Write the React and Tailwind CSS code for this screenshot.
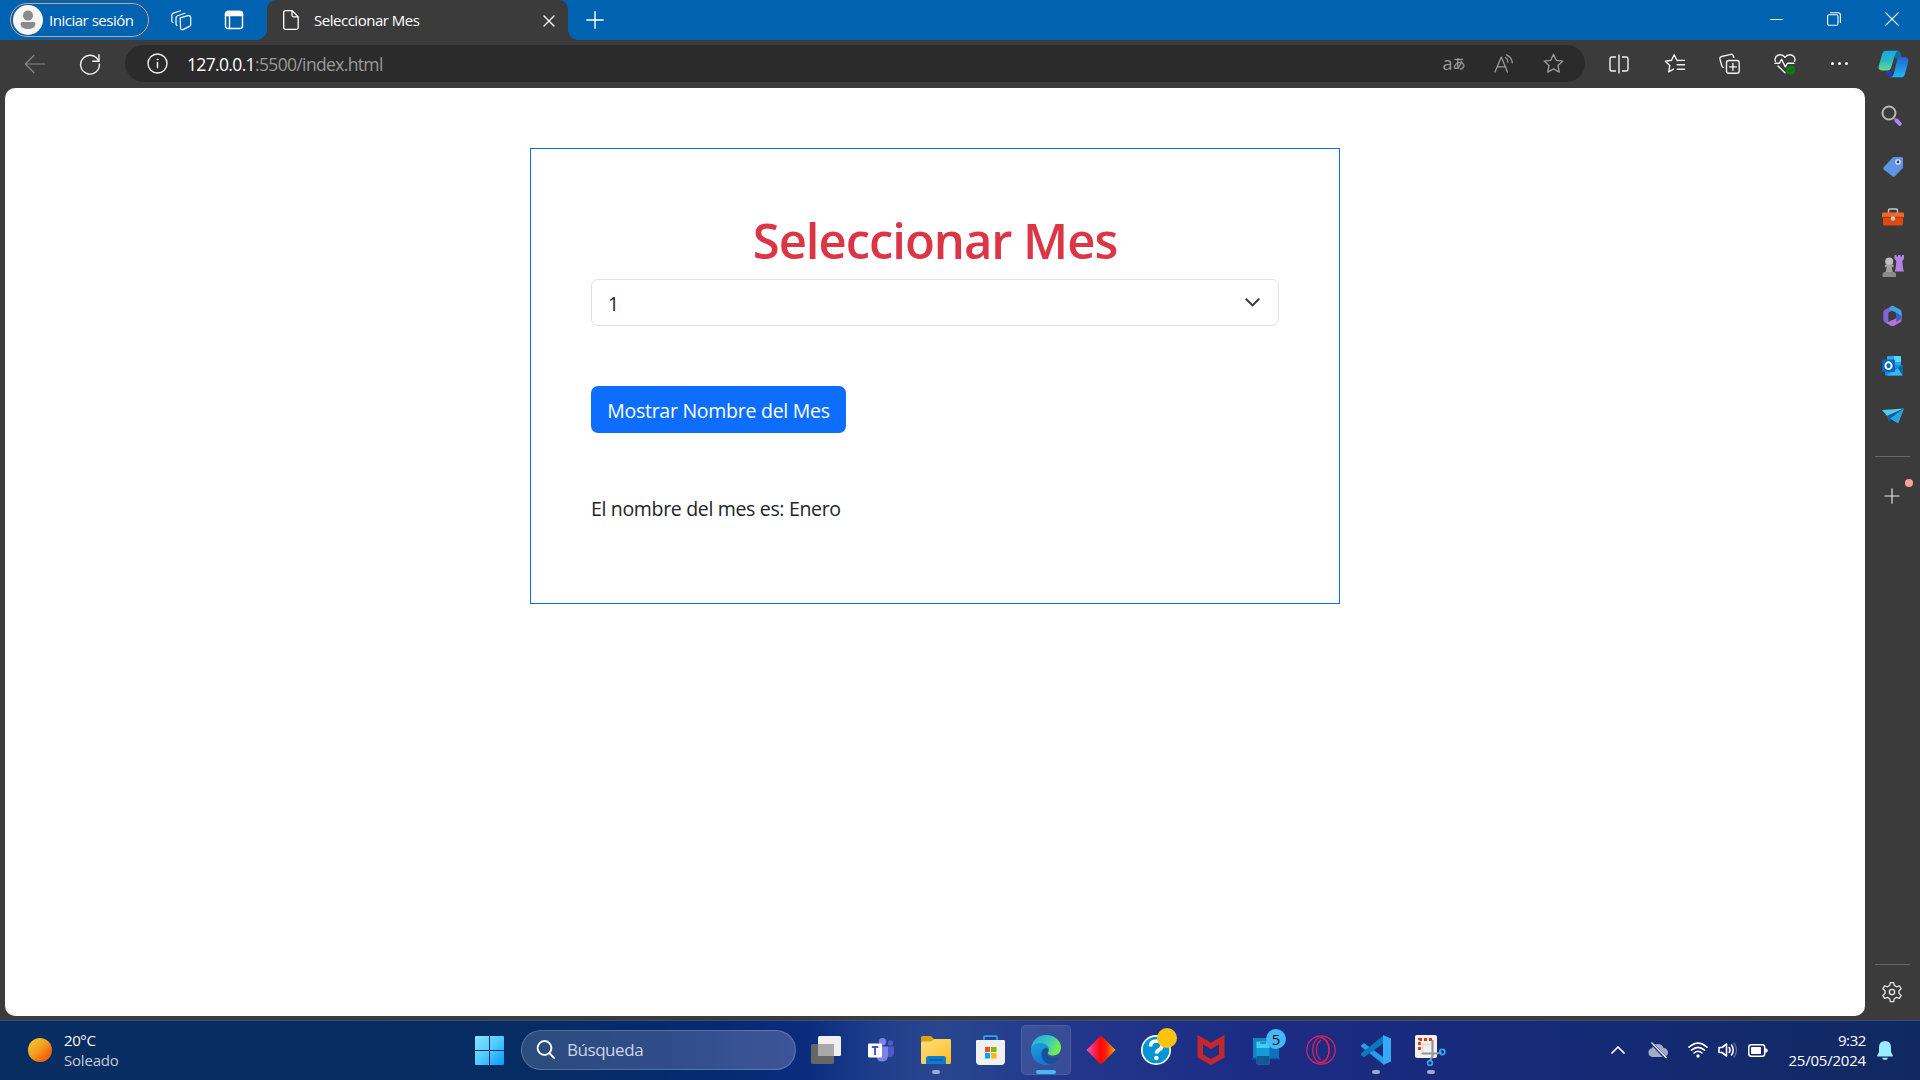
import React from "react";

const Svg = ({ size = 20, box = 24, children, className = "" }) => (
  <svg width={size} height={size} viewBox={`0 0 ${box} ${box}`} fill="none" stroke="currentColor" strokeWidth="1.4" strokeLinecap="round" strokeLinejoin="round" className={`shrink-0 ${className}`}>
    {children}
  </svg>
);

const Slot = ({ className = "", children }) => (
  <div className={`flex shrink-0 items-center justify-center ${className}`}>{children}</div>
);

/* ---------- Title bar ---------- */

function TitleBar() {
  return (
    <header className="flex h-10 shrink-0 bg-[#0063b1] text-white">
      <div className="ml-[10px] mt-[3px] flex h-[34px] w-[139px] items-center rounded-full border border-[#dba078] pl-[2px]">
        <svg width="30" height="30" viewBox="0 0 30 30" className="shrink-0">
          <circle cx="15" cy="15" r="15" fill="#f7f7f7" />
          <circle cx="15" cy="10.6" r="5" fill="#8b8b8b" />
          <path d="M9.6 17h10.8c1.2 0 2 .8 2 2 0 3.4-3.2 5-7.400 5s-7.400-1.600-7.400-5c0-1.200.8-2 2-2z" fill="#8b8b8b" />
        </svg>
        <span className="ml-[6px] whitespace-nowrap pb-px text-[15px] leading-[20px] tracking-[-0.48px]">Iniciar sesión</span>
      </div>
      <Slot className="ml-[6px] w-[52px]">
        <Svg size={22} box={22}>
          <path d="M10.200 8.900 18 6.700q2.700-.5 2.700 2v7.100q0 1.200-1.200 1.600l-6 3q-3 1.100-3-1.800z" strokeWidth="1.200" />
          <path d="M7 16.500q-1-.4-1-1.700V9q0-1.700 1.600-2.300L15 4.300" strokeWidth="1.200" />
          <path d="M3 13.500q-1.200-.4-1.200-1.800V6.300q0-1.700 1.600-2.200L10.500 1.800" strokeWidth="1.200" />
        </Svg>
      </Slot>
      <Slot className="w-[53px]">
        <Svg size={20} box={20}>
          <rect x="1.500" y="1.500" width="17" height="17" rx="2.500" />
          <path d="M1.500 5.500V4q0-2.500 2.500-2.500h12q2.500 0 2.500 2.500v1.500z" fill="currentColor" />
          <path d="M5.500 6v12.500" />
        </Svg>
      </Slot>
      <div className="relative ml-[7px] flex w-[301px] items-center rounded-t-[9px] bg-[#3b3b3b]">
        <span className="absolute -left-[10px] bottom-0 h-[10px] w-[10px] bg-[radial-gradient(circle_at_0_0,transparent_9.500px,#3b3b3b_10px)]" />
        <span className="absolute -right-[10px] bottom-0 h-[10px] w-[10px] bg-[radial-gradient(circle_at_100%_0,transparent_9.500px,#3b3b3b_10px)]" />
        <Slot className="w-[47px]">
          <svg width="16" height="20" viewBox="0 0 16 20" fill="none" stroke="white" strokeWidth="1.300" strokeLinejoin="round">
            <path d="M2.500.7h6.700l6 6v10.800q0 1.800-1.800 1.800H2.500Q.7 19.300.7 17.500v-15Q.7.700 2.500.7z" />
            <path d="M9 .8v4.400q0 1.700 1.700 1.700H15" />
          </svg>
        </Slot>
        <span className="flex-1 whitespace-nowrap pb-px text-[15px] leading-[20px] tracking-[-0.48px]">Seleccionar Mes</span>
        <Slot className="w-[38px] pt-px">
          <Svg size={12} box={12}><path d="m1 1 10 10M11 1 1 11" /></Svg>
        </Slot>
      </div>
      <Slot className="w-[53px] pb-[1px]">
        <Svg size={18} box={18}><path d="M9 .8v16.400M.8 9h16.400" /></Svg>
      </Slot>
      <div className="ml-auto flex pb-[2px]">
        <Slot className="w-[57px]"><span className="h-px w-[13px] bg-white" /></Slot>
        <Slot className="w-[58px]">
          <Svg size={14} box={14}>
            <rect x=".6" y="2.800" width="10.400" height="10.400" rx="1.500" strokeWidth="1.100" />
            <path d="M3.400.7H11q2.400 0 2.400 2.400v7.400" strokeWidth="1.100" />
          </Svg>
        </Slot>
        <Slot className="w-[57px]"><Svg size={14} box={14}><path d="m.8.8 12.400 12.400M13.200.8.8 13.200" strokeWidth="1.100" /></Svg></Slot>
      </div>
    </header>
  );
}

/* ---------- Address bar ---------- */

const STAR = "M12 2.500l2.900 6.200 6.800.8-5 4.700 1.300 6.800-6-3.400-6 3.400 1.300-6.800-5-4.700 6.800-.8z";

function Toolbar() {
  return (
    <nav className="flex h-12 shrink-0 items-center bg-[#3b3b3b] pb-[1px] text-[#f0f0f0]">
      <Slot className="ml-[7px] w-[55px] text-[#858585]">
        <Svg size={22} box={22}><path d="M20.500 11H1.700M9.800 2.500 1.300 11l8.500 8.500" strokeWidth="1.200" /></Svg>
      </Slot>
      <Slot className="w-[55px]">
        <Svg size={22} box={22}>
          <path d="M19.800 8.300A9.400 9.400 0 1 0 20.400 11" />
          <path d="M20 1.800v6.500h-6.300" />
        </Svg>
      </Slot>
      <div className="ml-2 flex h-[37px] w-[1460px] items-center rounded-full bg-[#2b2b2b] pl-[22px] pr-[6px]">
        <Svg size={21} box={21}>
          <circle cx="10.500" cy="10.500" r="9.500" />
          <path d="M10.500 9.500v5.300" strokeWidth="1.500" />
          <circle cx="10.500" cy="6.500" r=".6" fill="currentColor" strokeWidth=".6" />
        </Svg>
        <span className="ml-[19px] flex-1 whitespace-nowrap text-[17.500px] leading-[24px] tracking-[-0.65px] text-[#9a9a9a]">
          <span className="text-white">127.0.0.1</span>:5500/index.html
        </span>
        <Slot className="w-[50px] pb-[2px] text-[#9a9a9a]">
          <span className="text-[18px] leading-none">a</span>
          <span className="font-['Noto_Sans_CJK_JP',sans-serif] text-[13px] font-medium leading-none">あ</span>
        </Slot>
        <Slot className="w-[50px] text-[#9a9a9a]">
          <Svg size={20} box={20}>
            <path d="M1 18 7.300 3l6.200 15M3.300 12.800h8" strokeWidth="1.300" />
            <path d="M11.500 3.500q2.500 1.700 2.500 4.800M12.600.8q5.200 2.600 5.700 8" strokeWidth="1.300" />
          </Svg>
        </Slot>
        <Slot className="w-[50px] pr-px text-[#9a9a9a]"><Svg size={23}><path d={STAR} /></Svg></Slot>
      </div>
      <Slot className="ml-[7px] w-[55px] pr-px">
        <Svg size={20} box={20}>
          <path d="M7 3H3Q1 3 1 5v10q0 2 2 2h4M13 3h4q2 0 2 2v10q0 2-2 2h-4M10 .5v19" strokeLinecap="butt" />
        </Svg>
      </Slot>
      <Slot className="w-[55px]">
        <Svg size={22} box={22}>
          <path d="M14.200 7.500 12.900 7.300 10.200 1.700 7.500 7.300l-6.100.9 4.400 4.300-1.100 6.300 4.800-2.600" />
          <path d="M14.200 7.400h6.300M13.200 11.800h7.300M13.200 16.200h7.300" />
        </Svg>
      </Slot>
      <Slot className="w-[55px]">
        <Svg size={21} box={21}>
          <rect x="7.500" y="7.500" width="12.700" height="12.700" rx="2.300" />
          <path d="M13.900 10.500v6.800M10.500 13.900h6.800" />
          <path d="M14.700 4.300 14.200 2.700q-.5-1.700-2.300-1.300L2.600 3.500Q.5 4.100 1 6.200l1.900 6.900q.4 1.200 1.600 1.300" />
        </Svg>
      </Slot>
      <Slot className="w-[55px]">
        <Svg size={22} box={22}>
          <path d="M1.300 8.200C.3 4.300 3 1.700 6 1.700q3 0 5 2.600 2-2.600 5-2.600c3 0 5.700 2.600 4.700 6.500M4 13l7 6.800" />
          <path d="M1 10.300h4.300l2.300-4 3.600 7.500 2.200-3.500h6.600" />
          <circle cx="16.700" cy="17.200" r="4.600" fill="#0f7b10" stroke="none" />
          <path d="m14.900 17.300 1.300 1.300 2.400-2.500" stroke="#184a18" strokeWidth="1" />
        </Svg>
      </Slot>
      <Slot className="w-[55px] gap-[4px]">
        <span className="h-[3px] w-[3px] rounded-full bg-white" />
        <span className="h-[3px] w-[3px] rounded-full bg-white" />
        <span className="h-[3px] w-[3px] rounded-full bg-white" />
      </Slot>
      <Slot className="w-[53px]"><Copilot /></Slot>
    </nav>
  );
}

function Copilot() {
  return (
    <svg width="31" height="28" viewBox="0 0 31 28">
      <defs>
        <linearGradient id="cpA" x1="0" y1="0" x2="0" y2="1"><stop stopColor="#16a8e8" /><stop offset=".5" stopColor="#2fb5c4" /><stop offset="1" stopColor="#62dd8b" /></linearGradient>
        <linearGradient id="cpB" x1="0" y1="0" x2="0" y2="1"><stop stopColor="#2464d8" /><stop offset="1" stopColor="#1bb8f5" /></linearGradient>
      </defs>
      <path d="M16 .8h3.500q2.600 0 3.400 3l.9 3.500-6.500 1.500z" fill="#0f6f9e" />
      <path d="M8 20.500h6L13 27q-2.700-.1-3.500-3z" fill="#2438c9" />
      <path d="M8 .8h12q-2 .5-2.900 3.700l-3.900 13q-.9 3-4 3H4q-4.200 0-3.200-4.500L4 4.500Q5 .8 8 .8z" fill="url(#cpA)" />
      <path d="M21.500 7.300H27q4.200 0 3.200 4.500l-3.100 11.600q-1 3.900-4 3.900H13q2-.8 2.900-3.800l3-12.700q.5-3.500 2.600-3.500z" fill="url(#cpB)" />
    </svg>
  );
}

/* ---------- Page ---------- */

function Page() {
  return (
    <main className="ml-[5px] h-[928px] w-[1860px] shrink-0 rounded-[10px] bg-white pt-[60px] text-[#212529]">
      <section className="mx-auto h-[456px] w-[810px] border border-[#0d6efd] p-[60px]">
        <h1 className="mt-[1px] whitespace-nowrap text-center text-[49px] font-semibold leading-[60px] tracking-[-1.030px] text-[#dc3545]">Seleccionar Mes</h1>
        <div className="mt-[9px] flex h-[47px] items-center justify-between rounded-[7px] border border-[#dee2e6] pl-4 pr-[18px]">
          <span className="pt-[2px] text-[19.500px]">1</span>
          <svg width="15" height="9" viewBox="0 0 15 9" fill="none" stroke="#343a40" strokeWidth="2" strokeLinecap="round" strokeLinejoin="round"><path d="m1.300 1.200 6.200 6.200 6.200-6.200" /></svg>
        </div>
        <button className="mt-[60px] block h-[47px] w-[255px] whitespace-nowrap rounded-[7px] bg-[#0d6efd] pt-[3px] text-[19.500px] tracking-[-0.26px] text-white">Mostrar Nombre del Mes</button>
        <p className="mt-[61px] whitespace-nowrap text-[19.500px] leading-[30px] tracking-[-0.33px]">El nombre del mes es: Enero</p>
      </section>
    </main>
  );
}

/* ---------- Edge sidebar ---------- */

function Sidebar() {
  return (
    <aside className="flex w-[55px] flex-col items-center pt-[3px] text-[#e5e5e5]">
      <Slot className="h-[50px] pr-px">
        <svg width="22" height="22" viewBox="0 0 22 22" fill="none">
          <path d="m13 13 2.500 2.500" stroke="#777" strokeWidth="2" />
          <circle cx="8" cy="8" r="6.500" stroke="#b8b8b8" strokeWidth="2" />
          <path d="m15.500 15.500 3.300 3.300" stroke="#b583ef" strokeWidth="4" strokeLinecap="round" />
        </svg>
      </Slot>
      <Slot className="h-[50px] pt-px">
        <svg width="22" height="22" viewBox="0 0 22 22">
          <path d="M12 1h7.500Q21 1 21 2.500V11q0 1-.8 1.700l-7.400 7.500q-1.200 1.100-2.400 0L1.700 13.500q-1.100-1.200 0-2.300L10.500 1.700Q11.200 1 12 1z" fill="#5d94e6" />
          <circle cx="16" cy="6" r="2.700" fill="#e8f0fa" /><circle cx="16" cy="6" r="1.400" fill="#343b49" />
        </svg>
      </Slot>
      <Slot className="h-[50px] pt-[2px]">
        <svg width="22" height="18" viewBox="0 0 22 18">
          <path d="M6.500 5V2.500Q6.500 1 8 1h6q1.500 0 1.500 1.500V5" fill="none" stroke="#c6c6c6" strokeWidth="1.500" />
          <rect x="1" y="8" width="20" height="9.500" rx="1.500" fill="#dc4a10" />
          <rect y="4.500" width="22" height="5" rx="1.200" fill="#f3662a" /><path d="M.5 9.300h21" stroke="#a93407" />
          <circle cx="11" cy="10.500" r="2.200" fill="#c9c9c9" />
        </svg>
      </Slot>
      <Slot className="h-[50px]">
        <svg width="22" height="22" viewBox="0 0 22 22">
          <path d="M12.500 0h2v1.500h1.500V0h2.500v1.500H20V0h2v4l-1.700 1.800.7 7.200 1 3.500h-9.300l1-3.500.6-7.200L12.500 4z" fill="#b583e6" />
          <circle cx="7.200" cy="6.500" r="4" fill="#bdbdbd" /><path d="M3 9.800h8.500v2.400H9.700l1.300 5.300H3.500l1.300-5.300H3z" fill="#a1a1a1" />
          <path d="M.5 22v-2.500q0-2.500 2.500-2.500h8.500q2.500 0 2.500 2.500V22z" fill="#8a8a8a" />
        </svg>
      </Slot>
      <Slot className="h-[50px]">
        <svg width="21" height="22" viewBox="0 0 22 24">
          <path d="M11 .8 2.500 5.300Q1 6.200 1 8v8q0 1.800 1.500 2.700l4 2V8.500L14 4z" fill="#8065d8" />
          <path d="M9 1.500q2-1.200 4 0l6.500 3.700Q21 6 21 8v6.500L15 17V8.500L8 5z" fill="#36a7ec" />
          <path d="M3 18.800q2.500.7 5-1l7-4 6-4.300V16q0 1.800-1.500 2.700l-6.500 3.800q-2 1-4 0z" fill="#b273d8" />
          <path d="M15 8.500 21 12v3l-5.500 3.200q-.8-.5-.5-2z" fill="#3b5ec4" />
          <path d="m11 7.500 4 2.300v4.500l-4 2.300-4-2.300V9.800z" fill="#3b3b3b" />
        </svg>
      </Slot>
      <Slot className="h-[50px]"><Outlook /></Slot>
      <Slot className="h-[50px]">
        <svg width="22" height="16" viewBox="0 0 22 16">
          <path d="M0 2 22 .5 5 8z" fill="#53c9ee" /><path d="M22 .5 5 8l1.800 6L11 9.500z" fill="#0b61a4" /><path d="M22 .5 8 10.500l8.200 5z" fill="#29a4e3" />
        </svg>
      </Slot>
      <span className="mt-[15px] h-px w-[35px] shrink-0 bg-[#686868]" />
      <div className="relative mt-[31px] h-[18px] w-[55px] pr-[2px]">
        <Svg size={16} box={16} className="mx-auto block"><path d="M8 .8v14.400M.8 8h14.400" strokeWidth="1.200" /></Svg>
        <span className="absolute left-[40px] -top-[9px] h-2 w-2 rounded-full bg-[#ff9f9a]" />
      </div>
      <span className="mt-auto h-px w-[35px] shrink-0 bg-[#686868]" />
      <Slot className="mb-[2px] h-[53px] pr-px pt-px">
        <Svg size={22} box={24}>
          <path d="M10.200 1.700h3.600l.7 3.100 2.600 1.500 3-1 1.900 3.200-2.400 2.100v3l2.400 2.100-1.900 3.200-3-1-2.600 1.500-.7 3.100h-3.600l-.7-3.100-2.600-1.500-3 1L2 15.700l2.400-2.100v-3L2 8.500l1.900-3.200 3 1 2.600-1.500z" />
          <circle cx="12" cy="12.100" r="2.900" />
        </Svg>
      </Slot>
    </aside>
  );
}

function Outlook() {
  return (
    <svg width="21" height="20" viewBox="0 0 21 20">
      <path d="M5 1q0-1 1-1h12q1 0 1 1v10H5z" fill="#28a8ea" /><path d="M12 0h6q1 0 1 1v5h-7z" fill="#50d9ff" />
      <path d="M3 9h17.500v9.500q0 1-1 1H4.500Q3 19.500 3 18z" fill="#1490df" /><path d="M20.500 9v10l-9-5z" fill="#0a5fae" /><path d="M4.500 19.500 16 12l4.500 7.500z" fill="#35b8f1" />
      <rect y="3.500" width="13" height="12.500" rx="1.300" fill="#0a64c0" /><ellipse cx="6.500" cy="9.700" rx="3.100" ry="3.400" fill="none" stroke="white" strokeWidth="1.900" />
    </svg>
  );
}

/* ---------- Taskbar ---------- */

const Task = ({ children, running }) => (
  <div className="relative flex h-[50px] w-[55px] shrink-0 items-center justify-center">
    {children}
    {running && <span className="absolute bottom-[1px] left-[24px] h-[4px] w-[8px] rounded-full bg-[#a0a8cb]" />}
  </div>
);

function EdgeIcon() {
  return (
    <svg width="30" height="30" viewBox="0 0 30 30">
      <defs>
        <linearGradient id="egA" x1="0" y1="0" x2="1" y2=".4"><stop stopColor="#26a7e8" /><stop offset=".6" stopColor="#35c8c0" /><stop offset="1" stopColor="#70ed55" /></linearGradient>
        <linearGradient id="egB" x1="0" y1="0" x2=".5" y2="1"><stop stopColor="#1da0dd" /><stop offset="1" stopColor="#1175d5" /></linearGradient>
      </defs>
      <path d="M0 14C1 5 7 0 15 0c9 0 15 6 15 12.500 0 5-3.500 8-8 8-4 0-5.500-1.500-5-2.700 2-3.300.5-7.300-4.500-8.800C7 7.500 2 10 0 14z" fill="url(#egA)" />
      <path d="M0 14.500c1.500-4.500 6-7 11-6 4 .8 6.300 3.300 6.500 5.500-3-2-7 .5-6.500 6 .6 5.500 5 9.500 9.500 9A15 15 0 0 1 0 14.500z" fill="url(#egB)" />
      <path d="M11.300 15.500c-2.300 5.500.7 13 8.700 13.500 3.500-1 6.500-3.300 8-6.300.2-.5-.3-.8-.8-.5-4.500 2.300-11 1-11.500-4.700.1-1 .6-2 1.600-3.300-2-1.700-5-.7-6 1.300z" fill="#145299" />
    </svg>
  );
}

function Taskbar() {
  return (
    <footer className="flex h-[60px] shrink-0 items-center border-t border-[#35507c] bg-[linear-gradient(90deg,#082d61_0%,#072c63_28%,#052a70_37%,#0b2c7e_42%,#203e8b_46%,#28478f_49%,#22388c_55%,#1c2c84_65%,#182a7c_75%,#142a73_85%,#112960_100%)] pb-px text-white">
      <span className="ml-[28px] h-6 w-6 rounded-full bg-[linear-gradient(135deg,#f4c430_10%,#f2a020_45%,#f4680c_75%)]" />
      <div className="ml-[12px] w-[398px] text-[15px] leading-[20px]">
        <div className="tracking-[-0.4px]">20°C</div>
        <div className="tracking-[-0.2px] text-[#c3cbda]">Soleado</div>
      </div>
      <Task>
        <svg width="29" height="29" viewBox="0 0 29 29">
          <defs><linearGradient id="win" x1="0" y1="0" x2="1" y2="1"><stop stopColor="#8be3ff" /><stop offset=".5" stopColor="#4dccff" /><stop offset="1" stopColor="#0a98fb" /></linearGradient></defs>
          <path d="M1 0h13v14H0V1q0-1 1-1zM15 0h13q1 0 1 1v13H15zM0 15h14v14H1q-1 0-1-1zM15 15h14v13q0 1-1 1H15z" fill="url(#win)" />
        </svg>
      </Task>
      <div className="ml-[4px] flex h-10 w-[275px] items-center rounded-full border border-white/20 bg-[linear-gradient(90deg,#2b4c7e,#2f4c88_50%,#3d5599)] pl-[14px]">
        <svg width="20" height="20" viewBox="0 0 20 20" fill="none" stroke="#f1f3f7" strokeWidth="2" strokeLinecap="round"><circle cx="8.500" cy="8" r="6.900" /><path d="m13.500 13.200 4.700 4.900" /></svg>
        <span className="ml-[11px] text-[17px] tracking-[-0.45px] text-[#cdd5e5]">Búsqueda</span>
      </div>
      <div className="ml-[2px] flex">
        <Task>
          <svg width="30" height="28" viewBox="0 0 30 28">
            <rect y="8" width="23" height="20" rx="1.500" fill="#666" /><rect x="7" width="23" height="20" rx="1.500" fill="#f0f0f1" /><path d="M7 8h16v12H8.500Q7 20 7 18.500z" fill="#a8a9ab" />
          </svg>
        </Task>
        <Task>
          <svg width="26" height="24" viewBox="0 0 26 24">
            <circle cx="14.500" cy="3.700" r="3.700" fill="#7b83eb" /><circle cx="22.500" cy="5" r="2.700" fill="#5059c9" />
            <path d="M17 8.500h8q1 0 1 1V15q0 4-4.500 4T17 15z" fill="#5059c9" /><path d="M9 8.500h11V17q0 6.500-5.500 6.500T9 19z" fill="#7b83eb" />
            <rect y="5.500" width="14" height="14" rx="1" fill="white" /><path d="M3.800 9h6.500M7 9v8" stroke="#4b53bc" strokeWidth="1.900" />
          </svg>
        </Task>
        <Task running>
          <svg width="30" height="28" viewBox="0 0 30 28">
            <defs><linearGradient id="fld" x1="0" y1="0" x2="1" y2="1"><stop stopColor="#ffdf80" /><stop offset="1" stopColor="#fdbd20" /></linearGradient></defs>
            <path d="M0 1.500Q0 0 1.500 0H9q1 0 2 1l2 2h15.500Q30 3 30 4.500V12H0z" fill="#e2a008" />
            <path d="M0 7q0-1.500 1.500-1.500H10L13.500 3h15Q30 3 30 4.500v22q0 1.500-1.500 1.500h-27Q0 28 0 26.500z" fill="url(#fld)" />
            <path d="M5 28v-5.500Q5 20 7.500 20h15q2.500 0 2.500 2.500V28z" fill="#0d7bd0" /><path d="M8.500 24h13" stroke="#0b579a" strokeWidth="1.300" />
          </svg>
        </Task>
        <Task>
          <svg width="29" height="30" viewBox="0 0 29 30" className="mb-px">
            <path d="M8 6V2q0-.8.8-.8h11.400q.8 0 .8.800v4" fill="none" stroke="#22a7e8" strokeWidth="1.700" />
            <path d="M0 6q0-1 1-1h27q1 0 1 1v20q0 4-4 4H4q-4 0-4-4z" fill="#f0f0f0" />
            <path d="M9 12h5v5H9z" fill="#f25022" /><path d="M15 12h5.500v5H15z" fill="#7fba00" /><path d="M9 18h5v5.500H9z" fill="#00a4ef" /><path d="M15 18h5.500v5.500H15z" fill="#ffb900" />
          </svg>
        </Task>
        <div className="relative mx-[2.500px] flex h-[50px] w-[50px] items-center justify-center rounded-[5px] border border-white/10 bg-white/10">
          <EdgeIcon />
          <span className="absolute bottom-0 left-[14px] h-[4px] w-[20px] rounded-full bg-[#45b8f8]" />
        </div>
        <Task>
          <svg width="30" height="30" viewBox="0 0 30 30">
            <defs><linearGradient id="dmd"><stop stopColor="#ff4fc3" /><stop offset=".25" stopColor="#f6295c" /><stop offset=".5" stopColor="#ff0505" /><stop offset=".7" stopColor="#ff2a00" /><stop offset="1" stopColor="#ffae00" /></linearGradient></defs>
            <path d="m15 .5 14.500 14.500L15 29.500.5 15z" fill="url(#dmd)" />
          </svg>
        </Task>
        <Task>
          <svg width="36" height="38" viewBox="0 0 36 38" className="mb-[7px] ml-[6px]">
            <circle cx="15" cy="22" r="15" fill="white" /><circle cx="15" cy="22" r="13.300" fill="#0095d5" />
            <path d="M9.500 18.500q0-5.500 6-5.500 5.500 0 5.500 4.500 0 2.700-3 4.300-2.500 1.400-2.500 3.700" fill="none" stroke="white" strokeWidth="3.700" /><circle cx="15.300" cy="30" r="2.300" fill="white" />
            <circle cx="26" cy="10" r="10" fill="#ffc20e" />
          </svg>
        </Task>
        <Task>
          <svg width="28" height="30" viewBox="0 0 28 30"><path d="M.5 0 14 7.500 27.500 0v22.500L14 30 .5 22.500zM6 9.500v10l8 4.500 8-4.500v-10l-8 4.500z" fill="#c1272d" /></svg>
        </Task>
        <Task>
          <svg width="28" height="27" viewBox="0 0 28 27" className="mt-[3px]">
            <path d="M1 0h18v20H1z" fill="#1683c9" /><path d="M0 19.500h28v2H0z" fill="#0c579b" /><path d="M14 2h13v18H14z" fill="#1270b8" />
            <rect x="4.500" y="3.500" width="13" height="23" rx="1" fill="#169bd7" /><path d="M4.500 4.500q0-1 1-1h11q1 0 1 1V10h-13z" fill="#44cdf5" /><path d="M4.500 18h13v8.500h-13z" fill="#12599a" /><path d="M8 5h6" stroke="#0b5890" />
          </svg>
          <span className="absolute left-[28px] top-[4px] flex h-5 w-5 items-center justify-center rounded-full bg-[#45b8f8] text-[15px] leading-none text-[#071522]">5</span>
        </Task>
        <Task>
          <svg width="30" height="30" viewBox="0 0 30 30" fill="none" stroke="#e2225c" strokeWidth="1.200"><circle cx="15" cy="15" r="14.200" /><ellipse cx="15" cy="15" rx="8.300" ry="12.500" /><path d="M15 2.500q8 3 8 12.500t-8 12.500M15 5q-4.500 3-4.500 10T15 25" /></svg>
        </Task>
        <Task running>
          <svg width="30" height="30" viewBox="0 0 30 30">
            <path d="M0 10.300 3 8l19 14v7L.5 12q-.9-.8-.5-1.700z" fill="#279be6" /><path d="M0 20 3 22.300 22 8.500V1L.5 18q-.9.9-.5 2z" fill="#087abd" /><path d="M22 0 30 3.500v23L22 30z" fill="#32aaf5" />
          </svg>
        </Task>
        <Task running>
          <svg width="31" height="31" viewBox="0 0 31 31">
            <rect x="0" y="0" width="22" height="23" rx="2" fill="#f1f1f1" /><path d="M17 4.500H4.500V17" fill="none" stroke="#d83b01" strokeWidth="2.800" strokeDasharray="3 2" />
            <path d="M7.500 17V9.500H16" fill="none" stroke="#ddd" strokeWidth="2" /><path d="M17.500 5v16L15 26M6.500 18.500h16l4-1.500" fill="none" stroke="#949494" strokeWidth="2.200" />
            <circle cx="27.300" cy="17" r="2.600" fill="none" stroke="#31a8ed" strokeWidth="1.700" /><circle cx="15" cy="28" r="2.400" fill="none" stroke="#31a8ed" strokeWidth="1.700" />
          </svg>
        </Task>
      </div>
      <div className="ml-auto flex items-center">
        <Slot className="w-[40px]"><Svg size={14} box={14}><path d="m1 10 6-6 6 6" strokeWidth="1.700" /></Svg></Slot>
        <Slot className="w-[40px]">
          <svg width="20" height="18" viewBox="0 0 20 18"><path d="M4.500 16A4.400 4.400 0 0 1 4 7.300Q5 3 9.800 3q4.500 0 5.700 4a4.500 4.500 0 0 1 0 9z" fill="#a2acc9" /><path d="m3 1.500 15 15.800" stroke="#142a73" strokeWidth="3" /><path d="m3.500 1.500 15 15.500" stroke="white" strokeWidth="1.300" /></svg>
        </Slot>
        <Slot className="w-[35px] pl-[5px]">
          <Svg size={20} box={20}><path d="M1 7.200Q10-1 19 7.200M3.500 10.200q6.500-5.800 13 0M6 13q4-3.500 8 0" strokeWidth="1.600" /><circle cx="10" cy="16" r="1.700" fill="currentColor" stroke="none" /></Svg>
        </Slot>
        <Slot className="w-[30px]">
          <Svg size={20} box={20}><path d="M1 7.500h3L8.500 4v12L4 12.500H1zM11.200 7.500q1.700 2.500 0 5M13.500 5q3.500 5 0 10" strokeWidth="1.600" /><path d="M16 3q5 7 0 14" stroke="#5a6a99" strokeWidth="1.400" /></Svg>
        </Slot>
        <Slot className="w-[30px]">
          <svg width="20" height="13" viewBox="0 0 20 13"><rect x=".8" y=".8" width="15.900" height="11.400" rx="2.500" fill="none" stroke="white" strokeWidth="1.500" /><rect x="3" y="3" width="10" height="7" rx=".8" fill="white" /><path d="M17 4.500h1.200q1.500 0 1.500 2t-1.500 2H17z" fill="white" /></svg>
        </Slot>
        <div className="w-[93px] text-right text-[15px] leading-[20px]">
          <div className="tracking-[-0.4px]">9:32</div>
          <div className="tracking-[-0.2px]">25/05/2024</div>
        </div>
        <svg width="16" height="19" viewBox="0 0 16 19" className="ml-[11px] mr-[27px]" fill="#99ebff"><path d="M8 0q5.800 0 6 6v5l1.800 3.500q.3 1-.8 1H1q-1.100 0-.8-1L2 11V6q.2-6 6-6zM5 16.700h6Q10.300 19 8 19t-3-2.300z" /></svg>
      </div>
    </footer>
  );
}

export default function App() {
  return (
    <div className="flex h-[1080px] w-[1920px] flex-col overflow-hidden bg-[#3b3b3b] font-['Open_Sans','Noto_Sans',sans-serif]">
      <TitleBar />
      <Toolbar />
      <div className="flex h-[932px] shrink-0">
        <Page />
        <Sidebar />
      </div>
      <Taskbar />
    </div>
  );
}
